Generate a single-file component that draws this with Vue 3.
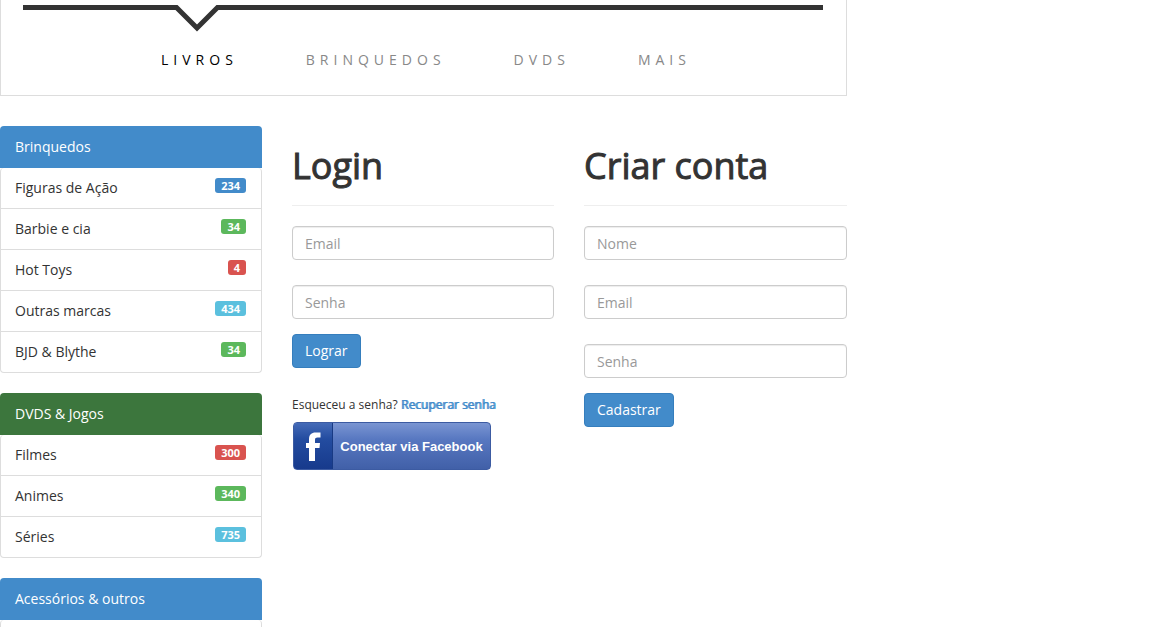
<script setup>
const nav = ['Livros', 'Brinquedos', 'DVDs', 'Mais']

const groups = [
  {
    title: 'Brinquedos',
    tone: 'blue',
    items: [
      { name: 'Figuras de Ação', count: 234, tone: 'primary' },
      { name: 'Barbie e cia', count: 34, tone: 'success' },
      { name: 'Hot Toys', count: 4, tone: 'danger' },
      { name: 'Outras marcas', count: 434, tone: 'info' },
      { name: 'BJD & Blythe', count: 34, tone: 'success' }
    ]
  },
  {
    title: 'DVDS & Jogos',
    tone: 'green',
    items: [
      { name: 'Filmes', count: 300, tone: 'danger' },
      { name: 'Animes', count: 340, tone: 'success' },
      { name: 'Séries', count: 735, tone: 'info' }
    ]
  },
  { title: 'Acessórios & outros', tone: 'blue', items: [] }
]
</script>

<template>
  <div class="page">
    <header class="banner">
      <svg class="marker" viewBox="0 0 800 32" aria-hidden="true">
        <polyline points="0,7.5 153.5,7.5 174,28 194.5,7.5 800,7.5" fill="none" stroke="#333" stroke-width="5" />
      </svg>
      <nav class="nav">
        <a v-for="(item, i) in nav" :key="item" href="#" :class="{ current: i === 0 }">{{ item }}</a>
      </nav>
    </header>

    <main class="columns">
      <aside>
        <section v-for="group in groups" :key="group.title" class="group">
          <a href="#" class="group-title" :class="group.tone">{{ group.title }}</a>
          <ul :class="{ empty: !group.items.length }">
            <li v-for="item in group.items" :key="item.name">
              <span>{{ item.name }}</span>
              <span class="badge" :class="item.tone">{{ item.count }}</span>
            </li>
          </ul>
        </section>
      </aside>

      <section>
        <h1>Login</h1>
        <form @submit.prevent>
          <input type="email" placeholder="Email" aria-label="Email" />
          <input type="password" placeholder="Senha" aria-label="Senha" />
          <button class="btn" type="submit">Lograr</button>
        </form>
        <p class="forgot">Esqueceu a senha? <a href="#">Recuperar senha</a></p>
        <button class="facebook" type="button">
          <span class="facebook-mark">
            <svg viewBox="0 0 16 29" width="16" height="29" aria-hidden="true">
              <path d="M4 29V16H1V11H4V7.500C4 2.500 6.500.500 10.500.500H15.500V5.500H12.500C10.800 5.500 10 6.200 10 8V11H15L14.500 16H10V29Z" fill="#fff" />
            </svg>
          </span>
          <span class="facebook-text">Conectar via Facebook</span>
        </button>
      </section>

      <section>
        <h1>Criar conta</h1>
        <form @submit.prevent>
          <input type="text" placeholder="Nome" aria-label="Nome" />
          <input type="email" placeholder="Email" aria-label="Email" />
          <input type="password" placeholder="Senha" aria-label="Senha" />
          <button class="btn" type="submit">Cadastrar</button>
        </form>
      </section>
    </main>
  </div>
</template>

<style>
body {
  margin: 0;
  background: #fff;
}
</style>

<style scoped>
.page,
.page * {
  box-sizing: border-box;
}
.page {
  max-width: 847px;
  font-family: "Open Sans", sans-serif;
  font-size: 14px;
  line-height: 20px;
  color: #333;
}
a {
  text-decoration: none;
}
.banner {
  border: 1px solid #ddd;
  border-top: 0;
  padding: 0 22px 25px;
}
.marker {
  display: block;
  width: 100%;
  max-width: 800px;
}
.nav {
  display: flex;
  justify-content: center;
  gap: 68px;
  margin-top: 18px;
  padding-left: 5px;
  text-transform: uppercase;
  letter-spacing: 5px;
}
.nav a {
  color: #888;
}
.nav .current {
  color: #000;
}
.columns {
  display: grid;
  grid-template-columns: 262fr 262fr 263fr;
  gap: 30px;
  margin-top: 30px;
}
.group + .group {
  margin-top: 20px;
}
.group-title {
  display: block;
  padding: 11px 15px;
  border-radius: 4px 4px 0 0;
  color: #fff;
}
.blue {
  background: #428bca;
}
.green {
  background: #3c763d;
}
.group ul {
  list-style: none;
  margin: 0;
  padding: 0;
  border: 1px solid #ddd;
  border-top: 0;
  border-radius: 4px;
}
.group .empty {
  height: 7px;
  border-bottom: 0;
  border-radius: 4px 4px 0 0;
}
.group li {
  display: flex;
  justify-content: space-between;
  align-items: flex-start;
  min-height: 41px;
  padding: 10px 15px 10px 14px;
  border-bottom: 1px solid #ddd;
}
.group li:last-child {
  border-bottom: 0;
  min-height: 40px;
}
.badge {
  height: 15px;
  padding: 0 6px;
  border-radius: 3px;
  color: #fff;
  font-size: 11px;
  font-weight: 700;
  line-height: 15px;
}
.primary {
  background: #428bca;
}
.success {
  background: #5cb85c;
}
.danger {
  background: #d9534f;
}
.info {
  background: #5bc0de;
}
h1 {
  margin: 20px 0;
  padding-bottom: 19px;
  border-bottom: 1px solid #eee;
  font-size: 36px;
  font-weight: 400;
  line-height: 40px;
  -webkit-text-stroke: 1px #333;
}
input {
  display: block;
  width: 100%;
  height: 34px;
  margin-bottom: 25px;
  padding: 6px 12px;
  border: 1px solid #ccc;
  border-radius: 4px;
  background: #fff;
  box-shadow: inset 0 1px 1px rgba(0, 0, 0, 0.075);
  color: #555;
  font: inherit;
}
input::placeholder {
  color: #999;
  opacity: 1;
}
input:last-of-type {
  margin-bottom: 15px;
}
.btn {
  display: block;
  height: 34px;
  padding: 6px 12px;
  border: 1px solid #357ebd;
  border-radius: 4px;
  background: #428bca;
  color: #fff;
  font: inherit;
}
.forgot {
  margin: 27px 0 7px;
  font-size: 12px;
}
.forgot a {
  color: #428bca;
  text-shadow: 1px 0 #428bca;
}
.facebook {
  display: flex;
  width: 198px;
  height: 48px;
  margin-left: 1px;
  padding: 0;
  border: 1px solid #3c5ba2;
  border-radius: 4px;
  overflow: hidden;
  background: linear-gradient(#7a95d2, #5878c1 35%, #4160a8);
  color: #fff;
}
.facebook-mark {
  display: flex;
  flex: none;
  align-items: center;
  justify-content: center;
  width: 39px;
  height: 100%;
  border-right: 1px solid #183a84;
  background: linear-gradient(#456bb8, #234ca0 35%, #173a8c);
}
.facebook-text {
  flex: 1;
  align-self: center;
  font-family: "Liberation Sans", sans-serif;
  font-size: 13px;
  font-weight: 700;
  white-space: nowrap;
}
</style>
